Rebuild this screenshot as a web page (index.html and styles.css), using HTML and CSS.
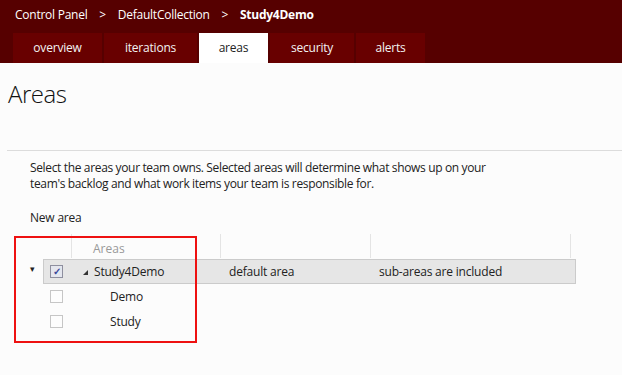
FILE: index.html
```html
<!DOCTYPE html>
<html>
    <head>
        <meta charset="utf-8" />
        <title>Areas</title>
        <link rel="stylesheet" href="styles.css">
    </head>
    <body>
        <div class="topbar">
            <div class="crumbs">
                <span>Control Panel</span>
                <span class="sep">&gt;</span>
                <span>DefaultCollection</span>
                <span class="sep">&gt;</span>
                <span class="current">Study4Demo</span>
            </div>
            <div class="tabs">
                <div class="tab t-overview">overview</div>
                <div class="tab t-iterations">iterations</div>
                <div class="tab t-areas active">areas</div>
                <div class="tab t-security">security</div>
                <div class="tab t-alerts">alerts</div>
            </div>
        </div>

        <div class="page">
            <h1 class="title">Areas</h1>
            <hr class="rule">

            <p class="intro">Select the areas your team owns. Selected areas will determine what shows up on your<br>team's backlog and what work items your team is responsible for.</p>

            <div class="newarea">New area</div>

            <div class="grid">
                <div class="ghead">
                    <div class="gc c-chk"></div>
                    <div class="gc c-name">Areas</div>
                    <div class="gc c-def"></div>
                    <div class="gc c-sub"></div>
                </div>
                <div class="grow selected">
                    <span class="caret">&#9662;</span>
                    <div class="gc c-chk"><span class="box checked">&#10003;</span></div>
                    <div class="gc c-name"><span class="tri"></span>Study4Demo</div>
                    <div class="gc c-def">default area</div>
                    <div class="gc c-sub">sub-areas are included</div>
                </div>
                <div class="grow">
                    <div class="gc c-chk"><span class="box"></span></div>
                    <div class="gc c-name child">Demo</div>
                </div>
                <div class="grow">
                    <div class="gc c-chk"><span class="box"></span></div>
                    <div class="gc c-name child">Study</div>
                </div>
                <div class="highlight"></div>
            </div>
        </div>
    </body>
</html>
```

FILE: styles.css
```css
*
{
    box-sizing: border-box;
}

html, body
{
    min-height: 100%;
}

body
{
    margin: 0;
    font: 12px "Open Sans", "Noto Sans", sans-serif;
    color: #222;
    background: #fcfcfc;
}

.topbar
{
    background: #560000;
    color: #fff;
}

.crumbs
{
    height: 33px;
    padding: 6px 0 0 15px;
    font-size: 12px;
    letter-spacing: -0.25px;
}
.crumbs .sep
{
    margin: 0 9px 0 9px;
}
.crumbs .current
{
    font-weight: bold;
}

.tabs
{
    display: flex;
    height: 30px;
    padding-left: 13px;
    gap: 2px;
}
.tab
{
    background: #680000;
    color: #f2f2f2;
    text-align: center;
    line-height: 30px;
    letter-spacing: -0.2px;
}
.tab.active
{
    background: #fff;
    color: #222;
}
.t-overview   { width: 89px; }
.t-iterations { width: 93px; }
.t-areas      { width: 69px; }
.t-security   { width: 84px; }
.t-alerts     { width: 69px; }

.page
{
    padding-left: 7px;
    padding-bottom: 30px;
}

.title
{
    margin: 0;
    padding: 14px 0 0 1px;
    height: 87px;
    font: 300 24px "Open Sans", "Noto Sans", sans-serif;
    letter-spacing: -0.5px;
    color: #111;
}

.rule
{
    margin: 0;
    border: 0;
    border-top: 1px solid #dcdcdc;
}

.intro
{
    margin: 9px 0 0 23px;
    line-height: 16px;
    letter-spacing: -0.35px;
}

.newarea
{
    margin: 17px 0 0 23px;
    letter-spacing: -0.2px;
}

.grid
{
    position: relative;
    margin: 8px 0 0 36px;
    width: 533px;
    height: 115px;
}
.ghead
{
    display: flex;
    height: 24px;
}
.ghead .gc
{
    border-right: 1px solid #e4e4e4;
    color: #999;
    padding-top: 6px;
}
.gc
{
    flex: none;
}
.c-chk  { width: 29px; padding-left: 7px; }
.c-name { width: 149px; padding-left: 21px; }
.c-def  { width: 150px; padding-left: 8px; }
.c-sub  { width: 200px; padding-left: 8px; }

.grow
{
    position: relative;
    display: flex;
    align-items: center;
    height: 25px;
}
.grow.selected
{
    margin-top: 1px;
    height: 25px;
    background: #e6e6e6;
    border: 1px solid #cbcbcb;
}
.grow.selected .c-chk
{
    width: 28px;
    padding-left: 6px;
}

.caret
{
    position: absolute;
    left: -14px;
    top: 2px;
    font-size: 9px;
    color: #222;
}

.box
{
    display: block;
    width: 13px;
    height: 13px;
    border: 1px solid #c6c6c6;
    background: #fdfdfd;
}
.box.checked
{
    border-color: #8e8f9f;
    background: #e4e6ee;
    color: #3b4a9c;
    font-size: 10px;
    line-height: 11px;
    text-align: center;
    font-weight: bold;
}

.tri
{
    display: inline-block;
    width: 0;
    height: 0;
    border-left: 5px solid transparent;
    border-bottom: 5px solid #333;
    margin-right: 6px;
    vertical-align: 1px;
}
.grow .c-name
{
    padding-left: 11px;
    letter-spacing: -0.2px;
}
.grow .c-name.child
{
    padding-left: 38px;
}
.grow .c-def,
.grow .c-sub
{
    letter-spacing: -0.2px;
}

.highlight
{
    position: absolute;
    left: -29px;
    top: 2px;
    width: 183px;
    height: 107px;
    border: 2px solid #ee1111;
}
```
